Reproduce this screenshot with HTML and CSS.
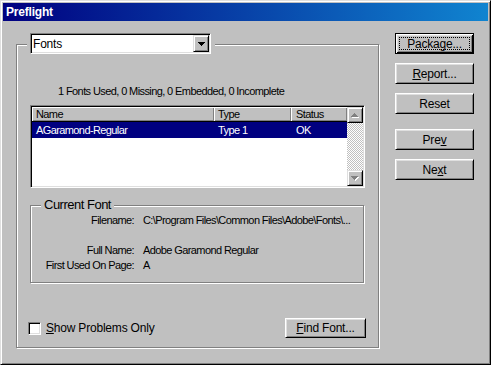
FILE: index.html
```html
<!DOCTYPE html>
<html lang="en">
<head>
  <meta charset="UTF-8" />
  <title>Preflight</title>
  <link rel="stylesheet" href="styles.css">
</head>
<body>

  <div class="window">
    <!-- Title bar -->
    <div class="titlebar">Preflight</div>

    <div class="client">

      <!-- Main group: section picker, list, current font -->
      <div class="group main-group">
        <div class="group-head">
          <div class="combo">
            <span class="combo-text">Fonts</span>
            <span class="combo-btn">
              <svg width="7" height="4" viewBox="0 0 7 4"><path d="M0 0h7v1H0zM1 1h5v1H1zM2 2h3v1H2zM3 3h1v1H3z" fill="#000"/></svg>
            </span>
          </div>
        </div>

        <div class="summary">1 Fonts Used, 0 Missing, 0 Embedded, 0 Incomplete</div>

        <div class="listview">
          <div class="list-main">
            <div class="list-header">
              <span class="col col-name">Name</span>
              <span class="col col-type">Type</span>
              <span class="col col-status">Status</span>
            </div>
            <div class="list-row selected">
              <span class="cell col-name">AGaramond-Regular</span>
              <span class="cell col-type">Type 1</span>
              <span class="cell col-status">OK</span>
            </div>
          </div>
          <div class="scrollbar">
            <span class="sb-btn">
              <svg width="8" height="5" viewBox="0 0 8 5"><path d="M4 1h1v1H4zM3 2h3v1H3zM2 3h5v1H2zM1 4h7v1H1z" fill="#fff"/><path d="M3 0h1v1H3zM2 1h3v1H2zM1 2h5v1H1zM0 3h7v1H0z" fill="#808080"/></svg>
            </span>
            <span class="sb-track"></span>
            <span class="sb-btn">
              <svg width="8" height="5" viewBox="0 0 8 5"><path d="M1 1h7v1H1zM2 2h5v1H2zM3 3h3v1H3zM4 4h1v1H4z" fill="#fff"/><path d="M0 0h7v1H0zM1 1h5v1H1zM2 2h3v1H2zM3 3h1v1H3z" fill="#808080"/></svg>
            </span>
          </div>
        </div>

        <div class="group font-group">
          <div class="group-label">Current Font</div>
          <div class="info-row">
            <span class="info-label">Filename:</span>
            <span class="info-value">C:\Program Files\Common Files\Adobe\Fonts\...</span>
          </div>
          <div class="info-row spaced">
            <span class="info-label">Full Name:</span>
            <span class="info-value">Adobe Garamond Regular</span>
          </div>
          <div class="info-row">
            <span class="info-label">First Used On Page:</span>
            <span class="info-value">A</span>
          </div>
        </div>

        <div class="bottom-row">
          <label class="check">
            <span class="check-box"></span>
            <span><u>S</u>how Problems Only</span>
          </label>
          <button class="btn find-btn"><u>F</u>ind Font...</button>
        </div>
      </div>

      <!-- Side buttons -->
      <div class="side">
        <button class="btn default-btn"><span class="focus">Package...</span></button>
        <button class="btn"><u>R</u>eport...</button>
        <button class="btn">Reset</button>
        <button class="btn gap-btn">Pre<u>v</u></button>
        <button class="btn">Ne<u>x</u>t</button>
      </div>

    </div>
  </div>

</body>
</html>
```

FILE: styles.css
```css
* {
  box-sizing: border-box;
}

body {
  margin: 0;
  background: #c0c0c0;
  font-family: "Liberation Sans", Arial, sans-serif;
  font-size: 11px;
  letter-spacing: -0.6px;
  color: #000;
}

.window {
  width: 491px;
  height: 365px;
  display: flex;
  flex-direction: column;
  background: #c0c0c0;
  border: 1px solid;
  border-color: #dfdfdf #000 #000 #dfdfdf;
  box-shadow: inset 1px 1px #fff, inset -1px -1px #808080;
  padding: 2px;
}

.titlebar {
  height: 18px;
  line-height: 18px;
  padding-left: 3px;
  background: linear-gradient(to right, #000080, #1084d0);
  color: #fff;
  font-weight: bold;
  font-size: 12px;
  letter-spacing: -0.2px;
}

.client {
  flex: 1;
  display: flex;
  align-items: flex-start;
}

/* etched group frame */
.group {
  display: flex;
  flex-direction: column;
  border: 1px solid #808080;
  box-shadow: inset 1px 1px #fff, 1px 1px #fff;
}

.main-group {
  width: 363px;
  height: 304px;
  margin: 23px 0 0 13px;
}

.group-head {
  align-self: flex-start;
  margin: -12px 0 0 10px;
  padding: 0 4px 0 3px;
  background: #c0c0c0;
}

.combo {
  width: 181px;
  height: 21px;
  display: flex;
  align-items: center;
  background: #fff;
  border: 1px solid;
  border-color: #808080 #fff #fff #808080;
  box-shadow: inset 1px 1px #000, inset -1px -1px #dfdfdf;
  padding: 1px;
}

.combo-text {
  flex: 1;
  padding-left: 1px;
  font-size: 12px;
  letter-spacing: -0.2px;
}

.combo-btn,
.sb-btn {
  display: flex;
  align-items: center;
  justify-content: center;
  background: #c0c0c0;
  border: 1px solid;
  border-color: #dfdfdf #000 #000 #dfdfdf;
  box-shadow: inset 1px 1px #fff, inset -1px -1px #808080;
}

.combo-btn {
  width: 16px;
  height: 17px;
}

.summary {
  margin: 31px 0 0 41px;
  line-height: 13px;
}

.listview {
  width: 335px;
  height: 83px;
  margin: 7px 0 0 13px;
  display: flex;
  background: #fff;
  border: 1px solid;
  border-color: #808080 #fff #fff #808080;
  box-shadow: inset 1px 1px #000, inset -1px -1px #dfdfdf;
  padding: 1px;
}

.list-main {
  flex: 1;
}

.list-header,
.list-row {
  display: flex;
}

.list-header .col {
  height: 15px;
  line-height: 14px;
  background: #c0c0c0;
  box-shadow: inset 1px 1px #fff, inset -1px -1px #808080;
  border-bottom: 1px solid #000;
}

.col,
.cell {
  padding-left: 4px;
  white-space: nowrap;
}

.col-name {
  width: 182px;
}

.col-type {
  width: 77px;
}

.col-status {
  flex: 1;
  padding-left: 5px;
}

.list-row {
  height: 16px;
  line-height: 16px;
}

.list-row.selected {
  background: #000080;
  color: #fff;
}

.scrollbar {
  width: 16px;
  display: flex;
  flex-direction: column;
}

.sb-btn {
  height: 16px;
}

.sb-track {
  flex: 1;
  background: repeating-conic-gradient(#fff 0 25%, #c0c0c0 0 50%) 0 0 / 2px 2px;
}

.font-group {
  width: 334px;
  height: 78px;
  margin: 17px 0 0 13px;
}

.group-label {
  align-self: flex-start;
  margin: -9px 0 0 10px;
  padding: 0 3px;
  line-height: 16px;
  background: #c0c0c0;
  font-size: 13px;
  letter-spacing: -0.5px;
}

.info-row {
  display: flex;
  gap: 9px;
  line-height: 15px;
}

.info-row:first-of-type {
  margin-top: 5px;
}

.info-row.spaced {
  margin-top: 15px;
}

.info-label {
  width: 103px;
  text-align: right;
}

.bottom-row {
  margin-top: auto;
  display: flex;
  align-items: center;
  justify-content: space-between;
  padding: 0 12px 9px 11px;
}

.check {
  display: flex;
  align-items: center;
  gap: 5px;
  font-size: 12px;
  letter-spacing: -0.2px;
}

.check-box {
  width: 13px;
  height: 13px;
  background: #fff;
  border: 1px solid;
  border-color: #808080 #fff #fff #808080;
  box-shadow: inset 1px 1px #000, inset -1px -1px #dfdfdf;
}

.btn {
  display: flex;
  align-items: center;
  justify-content: center;
  height: 21px;
  padding: 0;
  background: #c0c0c0;
  border: 1px solid;
  border-color: #fff #000 #000 #fff;
  box-shadow: inset 1px 1px #dfdfdf, inset -1px -1px #808080;
  font-family: inherit;
  font-size: 12px;
  letter-spacing: -0.2px;
  color: #000;
}

.find-btn {
  width: 81px;
  height: 20px;
}

.side {
  width: 79px;
  margin: 12px 0 0 16px;
  display: flex;
  flex-direction: column;
  gap: 9px;
}

.side .btn {
  width: 79px;
}

.side .gap-btn {
  margin-top: 6px;
}

.default-btn {
  border: 1px solid #000;
  box-shadow: inset 1px 1px #fff, inset -1px -1px #000, inset 2px 2px #dfdfdf, inset -2px -2px #808080;
}

.focus {
  flex: 1;
  align-self: stretch;
  margin: 3px;
  border: 1px dotted #000;
  display: flex;
  align-items: center;
  justify-content: center;
}
```
